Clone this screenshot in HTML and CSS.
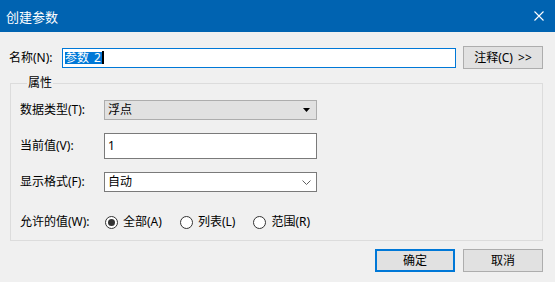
FILE: index.html
```html
<!DOCTYPE html>
<html lang="zh-CN">
<head>
<meta charset="utf-8">
<title>创建参数</title>
<link rel="stylesheet" href="styles.css">
</head>
<body>
<div class="dialog">
  <div class="titlebar">
    <span class="title">创建参数</span>
    <svg class="close" width="10" height="10" viewBox="0 0 10 10"><path d="M0.5 0.5L9.5 9.5M9.5 0.5L0.5 9.5" stroke="#ffffff" stroke-width="1.1" fill="none"/></svg>
  </div>
  <div class="content">
    <div class="name-row">
      <span class="name-label">名称(N):</span>
      <div class="textbox focused"><span class="sel">参数 2</span><span class="caret"></span></div>
      <button class="btn btn-note">注释(C) &gt;&gt;</button>
    </div>
    <fieldset class="group">
      <legend>属性</legend>
      <div class="row row-type">
        <span class="lbl">数据类型(T):</span>
        <div class="combo combo-ro">
          <span>浮点</span>
          <svg class="tri" width="7" height="4" viewBox="0 0 7 4"><path d="M0 0H7L3.5 4Z" fill="#000"/></svg>
        </div>
      </div>
      <div class="row row-value">
        <span class="lbl">当前值(V):</span>
        <div class="textbox box-value"><span>1</span></div>
      </div>
      <div class="row row-format">
        <span class="lbl">显示格式(F):</span>
        <div class="combo combo-edit">
          <span>自动</span>
          <svg class="chev" width="9" height="5" viewBox="0 0 9 5"><path d="M0.5 0.5L4.5 4.5L8.5 0.5" stroke="#606060" stroke-width="1" fill="none"/></svg>
        </div>
      </div>
      <div class="row row-allowed">
        <span class="lbl">允许的值(W):</span>
        <div class="radios">
          <span class="radio checked"><span class="dot"></span>全部(A)</span>
          <span class="radio"><span class="dot"></span>列表(L)</span>
          <span class="radio"><span class="dot"></span>范围(R)</span>
        </div>
      </div>
    </fieldset>
    <div class="actions">
      <button class="btn btn-default">确定</button>
      <button class="btn">取消</button>
    </div>
  </div>
</div>
</body>
</html>
```
FILE: styles.css
```css
* { box-sizing: border-box; }
html, body {
  margin: 0;
  padding: 0;
  background: #f0f0f0;
}
body {
  width: 555px;
  height: 282px;
  overflow: hidden;
  font-family: "Noto Sans", "Noto Sans CJK SC", sans-serif;
  font-size: 12px;
  color: #000;
}
.dialog {
  width: 555px;
  height: 282px;
  background: #f0f0f0;
}
.titlebar {
  height: 32px;
  background: #0063b1;
  color: #fff;
  display: flex;
  align-items: center;
  justify-content: space-between;
  padding: 0 11px 0 6px;
}
.title {
  font-size: 13px;
  line-height: 16px;
  padding-top: 2px;
}
.close { display: block; }
.content {
  padding: 14px 12px 0 9px;
}
.name-row {
  display: flex;
  align-items: center;
  height: 23px;
}
.name-label {
  width: 53px;
  line-height: 16px;
}
.textbox {
  background: #fff;
  border: 1px solid #7a7a7a;
  display: flex;
  align-items: center;
  padding-left: 3px;
  line-height: 16px;
}
.textbox.focused {
  width: 394px;
  height: 20px;
  border-color: #0078d7;
  padding-left: 2px;
}
.sel {
  background: #0078d7;
  color: #fff;
  line-height: 12px;
  height: 12px;
  padding-right: 1px;
  word-spacing: 2px;
}
.caret {
  width: 2px;
  height: 13px;
  background: #000;
}
.btn {
  font-family: inherit;
  font-size: 12px;
  color: #000;
  background: #e1e1e1;
  border: 1px solid #adadad;
  width: 80px;
  height: 23px;
  padding: 0;
  line-height: 16px;
  display: flex;
  align-items: center;
  justify-content: center;
}
.btn-note {
  margin-left: 7px;
  word-spacing: 2px;
}
.btn-default {
  border: 2px solid #0078d7;
}
.group {
  margin: 6px 0 0 1px;
  width: 533px;
  border: 1px solid #dcdcdc;
  padding: 9px 0 8px 9px;
  min-width: 0;
}
.group legend {
  margin-left: 7px;
  padding: 0 1px;
  line-height: 16px;
  height: 16px;
}
.row {
  display: flex;
  align-items: center;
}
.lbl {
  width: 84px;
  line-height: 16px;
  flex: none;
}
.row-type { height: 20px; }
.row-value { height: 26px; margin-top: 13px; }
.row-format { height: 20px; margin-top: 13px; }
.row-allowed { height: 20px; margin-top: 20px; }
.combo {
  width: 213px;
  height: 20px;
  display: flex;
  align-items: center;
  justify-content: space-between;
  padding: 0 5px 0 3px;
  line-height: 16px;
}
.combo-ro {
  background: #e1e1e1;
  border: 1px solid #adadad;
  padding-right: 6px;
}
.combo-edit {
  background: #fff;
  border: 1px solid #7a7a7a;
}
.tri, .chev { display: block; }
.box-value {
  width: 213px;
  height: 26px;
}
.radios {
  display: flex;
  align-items: center;
  gap: 18px;
  margin-left: 1px;
}
.radio {
  display: flex;
  align-items: center;
  gap: 5px;
  line-height: 16px;
}
.dot {
  width: 13px;
  height: 13px;
  border: 1px solid #333;
  border-radius: 50%;
  background: #fff;
  display: flex;
  align-items: center;
  justify-content: center;
}
.radio.checked .dot::after {
  content: "";
  width: 7px;
  height: 7px;
  border-radius: 50%;
  background: #333;
}
.actions {
  display: flex;
  justify-content: flex-end;
  gap: 8px;
  margin-top: 8px;
}
```
